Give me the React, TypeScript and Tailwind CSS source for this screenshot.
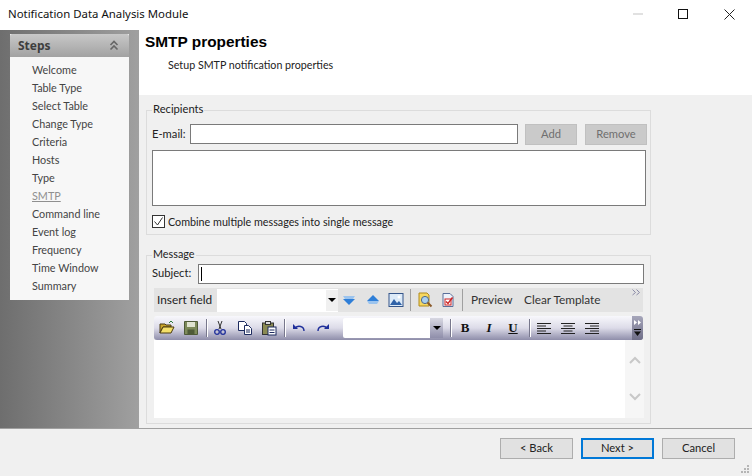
import { ReactNode } from "react";

const steps = ["Welcome", "Table Type", "Select Table", "Change Type", "Criteria", "Hosts", "Type", "SMTP", "Command line", "Event log", "Frequency", "Time Window", "Summary"];

const Ico = ({ children, className = "" }: { children: ReactNode; className?: string }) => (
	<svg width="16" height="16" viewBox="0 0 16 16" className={`shrink-0 ${className}`}>{children}</svg>
);

const Arrow = ({ up }: { up?: boolean }) => (
	<Ico>
		{up ? (
			<>
				<path d="M8 3l6 6H2z" fill="#2f7fd8" />
				<path d="M2 9h12l-2 3H4z" fill="#9cc4ee" />
			</>
		) : (
			<>
				<path d="M2 4h12l-2 3H4z" fill="#9cc4ee" />
				<path d="M2 7h12l-6 6z" fill="#2f7fd8" />
			</>
		)}
	</Ico>
);

const Caret = () => <span className="w-0 h-0 border-x-[4px] border-x-transparent border-t-[4px] border-t-black"></span>;

const Sep = ({ className = "" }: { className?: string }) => <span className={`w-[2px] h-[18px] shrink-0 bg-[#77778c] border-r border-white ${className}`}></span>;

const WinButton = ({ label, focused }: { label: string; focused?: boolean }) => (
	<button className={`w-[73px] h-[21px] text-[#222] flex items-center justify-center bg-[#e1e1e1] ${focused ? "border-2 border-[#0078d7]" : "border border-[#adadad]"}`}>{label}</button>
);

export default function App() {
	return (
		<div className="w-[752px] h-[476px] overflow-hidden flex flex-col bg-[#f0f0f0] text-[11.200px] text-[#222] font-['Lato','Liberation_Sans',sans-serif]">
			{/* title bar */}
			<div className="h-[30px] shrink-0 bg-white flex items-center pl-[8px] pr-[17px] pb-[2px]">
				<span className="text-[11.400px] text-[#111] flex-1 font-['Noto_Sans',sans-serif]">Notification Data Analysis Module</span>
				<svg width="10" height="2" className="mr-[35px]"><rect width="10" height="1" y="0.5" fill="#c4c4c4" /></svg>
				<svg width="10" height="10" className="mr-[36px]"><rect x="0.5" y="0.5" width="9" height="9" fill="none" stroke="#111" /></svg>
				<svg width="11" height="11"><path d="M.5.5l10 10M10.500.5l-10 10" stroke="#222" fill="none" /></svg>
			</div>

			<div className="flex-1 flex min-h-0">
				{/* steps side */}
				<div className="w-[139px] shrink-0 bg-gradient-to-r from-[#6e6e6e] to-[#a0a0a0] pt-[4px] pl-[10px]">
					<div className="w-[119px] h-[266px] bg-[#f7f7f7]">
						<div className="h-[23px] rounded-t-[2px] bg-gradient-to-b from-[#c8c8c8] to-[#a2a2a2] flex items-center justify-between pl-[8px] pr-[10px]">
							<span className="font-bold text-[#3e3e3e] text-[12px] font-['Noto_Sans',sans-serif]">Steps</span>
							<svg width="10" height="11" viewBox="0 0 10 11" fill="none" stroke="#666" strokeWidth="1.600"><path d="M1.500 5l3.500-3.500L8.500 5M1.500 9.500L5 6l3.500 3.500" /></svg>
						</div>
						<ul className="pt-[4px] pl-[22px] text-[10.800px]">
							{steps.map((s) => (
								<li key={s} className={`h-[18px] leading-[18px] ${s === "SMTP" ? "text-[#8f8f8f] underline" : "text-[#444]"}`}>{s}</li>
							))}
						</ul>
					</div>
				</div>

				{/* main */}
				<div className="flex-1 flex flex-col min-w-0">
					<div className="h-[65px] shrink-0 bg-white pl-[6px]">
						<h1 className="font-['Liberation_Sans',sans-serif] font-bold text-[15.400px] leading-[18px] pt-[3px] text-black">SMTP properties</h1>
						<p className="pl-[23px] pt-[5px] leading-[18px] text-[10.700px]">Setup SMTP notification properties</p>
					</div>

					<div className="flex-1 pl-[7px] pt-[8px]">
						<fieldset className="w-[505px] h-[132px] border border-[#dcdcdc] pl-[5px] pr-[3px]">
							<legend className="px-[1px] leading-[12px] pb-[2px]">Recipients</legend>
							<div className="flex items-center h-[21px] mt-[7px]">
								<span className="w-[38px] -mt-[1px]">E-mail:</span>
								<div className="w-[328px] h-[20px] bg-white border border-[#7a7a7a] self-start"></div>
								<button className="ml-[7px] w-[52px] h-[21px] bg-[#cacaca] border border-[#c0c0c0] text-[#6f6f6f]">Add</button>
								<button className="ml-[8px] w-[62px] h-[21px] bg-[#cacaca] border border-[#c0c0c0] text-[#6f6f6f]">Remove</button>
							</div>
							<div className="w-[494px] h-[56px] mt-[5px] bg-white border border-[#7a7a7a]"></div>
							<label className="flex items-center mt-[8px] h-[14px] text-[10.750px] leading-[16px]">
								<span className="w-[13px] h-[13px] border border-[#333] bg-white flex items-center justify-center mr-[3px]">
									<svg width="11" height="11" viewBox="0 0 11 11" fill="none" stroke="#333" strokeWidth="1"><path d="M1.500 5.500l3 3.500 5-7.500" /></svg>
								</span>
								<span className="pt-[1px]">Combine multiple messages into single message</span>
							</label>
						</fieldset>

						<fieldset className="w-[505px] h-[176px] mt-[13px] border border-[#dcdcdc] pl-[4px]">
							<legend className="ml-[1px] px-[1px] leading-[12px] pb-[2px] text-[10.800px]">Message</legend>
							<div className="flex items-center h-[20px] mt-[2px]">
								<span className="w-[47px] pl-[1px] -mt-[1px]">Subject:</span>
								<div className="w-[446px] h-[20px] bg-white border border-[#7a7a7a] flex items-center pl-[2px]">
									<span className="w-px h-[14px] bg-black"></span>
								</div>
							</div>

							{/* toolbar one */}
							<div className="w-[489px] ml-[3px] mt-[4px] h-[24px] bg-[#e3e3e3] flex items-center relative whitespace-nowrap text-[11.800px]">
								<span className="pl-[3px] w-[63px] shrink-0">Insert field</span>
								<div className="w-[121px] h-[23px] bg-white flex items-center justify-end">
									<span className="w-[12px] h-[21px] bg-[#f0f0f0] flex items-center justify-center"><Caret /></span>
								</div>
								<span className="ml-[3px]"><Arrow /></span>
								<span className="ml-[8px]"><Arrow up /></span>
								<Ico className="ml-[7px]">
									<rect x="1" y="1.500" width="14" height="13" fill="#dceaf8" stroke="#34558a" />
									<path d="M2 13l4-6 3 4 2-2 3 4z" fill="#2f62a8" />
									<circle cx="11" cy="5" r="1.500" fill="#fff" />
								</Ico>
								<span className="ml-[6px] w-px h-[22px] bg-[#a0a0a0]"></span>
								<Ico className="ml-[6px]">
									<path d="M2 1h8l2 2v11H2z" fill="#f6d860" stroke="#b08a1c" />
									<circle cx="8" cy="8" r="3.600" fill="#a9d0f0" stroke="#4f6a8a" />
									<path d="M10.500 10.500l4 4" stroke="#8a5a2a" strokeWidth="2" />
								</Ico>
								<Ico className="ml-[7px]">
									<path d="M3 1.500h7l3 3v10H3z" fill="#eef2fa" stroke="#5a6f9a" />
									<rect x="5" y="7" width="6" height="6" fill="#fff" stroke="#c22" />
									<path d="M6 9.500l2 2 4.500-6" fill="none" stroke="#c22" strokeWidth="1.400" />
								</Ico>
								<span className="ml-[6px] w-px h-[22px] bg-[#a0a0a0]"></span>
								<span className="ml-[8px] w-[53px] text-[#333]">Preview</span>
								<span className="text-[#333]">Clear Template</span>
								<svg width="9" height="7" viewBox="0 0 9 7" fill="none" stroke="#8b8ba8" className="absolute right-[2px] top-[1px]"><path d="M.5.500l3 3-3 2.500M4.500.500l3 3-3 2.500" /></svg>
							</div>

							{/* toolbar two */}
							<div className="w-[489px] ml-[3px] mt-[4px] h-[24px] rounded-[3px] bg-gradient-to-b from-[#f8f8fc] via-[#dcdbe8] to-[#8f8eaa] flex items-center pl-[5px] text-[#111]">
								<Ico>
									<path d="M1 4h5l1 1h5v2H4L1 13z" fill="#caa52a" stroke="#4a3a10" />
									<path d="M4 7h11l-3 6H1z" fill="#f4df6a" stroke="#4a3a10" />
									<path d="M10 3l2-2 2 2" fill="none" stroke="#2a7a3a" />
								</Ico>
								<Ico className="ml-[8px]">
									<path d="M1.500 1.500h13v13h-13z" fill="#7d8a5a" stroke="#4e5a38" />
									<rect x="4" y="2" width="8" height="5" fill="#dfe3d0" />
									<rect x="4.500" y="9.500" width="7" height="5" fill="#4e5a38" />
								</Ico>
								<Sep className="ml-[7px]" />
								<Ico className="ml-[4px]">
									<path d="M6 1l3 8M10 1L7 9" stroke="#333" fill="none" />
									<circle cx="5" cy="12" r="2.300" fill="none" stroke="#1f2f9a" strokeWidth="1.300" />
									<circle cx="11" cy="12" r="2.300" fill="none" stroke="#1f2f9a" strokeWidth="1.300" />
								</Ico>
								<Ico className="ml-[9px]">
									<path d="M1.500 1.500h6l2 2v7h-8z" fill="#fff" stroke="#1d2b5f" />
									<path d="M7.500 5.500h4l3 3v6h-7z" fill="#fff" stroke="#1d2b5f" />
									<path d="M9 10h4M9 12h4" stroke="#1d2b5f" />
								</Ico>
								<Ico className="ml-[8px]">
									<rect x="1.500" y="3" width="11" height="11.500" fill="#8a8a52" stroke="#333" />
									<rect x="4.500" y="1.500" width="5" height="3" fill="#ddd" stroke="#333" />
									<rect x="7" y="7" width="8" height="8" fill="#fff" stroke="#1d2b5f" />
									<path d="M8.500 10h5M8.500 12.500h5" stroke="#1d2b5f" />
								</Ico>
								<Sep className="ml-[7px]" />
								<Ico className="ml-[5px]">
									<path d="M2 4v5h5z" fill="#1f2f9a" />
									<path d="M4 8c3-3 9-2 9 3" fill="none" stroke="#1f2f9a" strokeWidth="1.400" />
								</Ico>
								<Ico className="ml-[8px]">
									<path d="M14 4v5H9z" fill="#1f2f9a" />
									<path d="M12 8c-3-3-9-2-9 3" fill="none" stroke="#1f2f9a" strokeWidth="1.400" />
								</Ico>
								<div className="ml-[12px] w-[100px] h-[20px] bg-white rounded-l-[2px] flex items-center justify-end shrink-0">
									<span className="w-[13px] h-[20px] bg-gradient-to-b from-[#d8d8e2] to-[#8f8eaa] flex items-center justify-center"><Caret /></span>
								</div>
								<Sep className="ml-[7px]" />
								<span className="ml-[5px] w-[16px] text-center font-['Liberation_Serif',serif] font-bold text-[13px]">B</span>
								<span className="ml-[8px] w-[16px] text-center font-['Liberation_Serif',serif] font-bold italic text-[13px]">I</span>
								<span className="ml-[8px] w-[16px] text-center font-['Liberation_Serif',serif] font-bold underline text-[13px]">U</span>
								<Sep className="ml-[8px]" />
								<Ico className="ml-[5px]"><path d="M1 3.500h14M1 6h9M1 8.500h14M1 11h9M1 13.500h14" stroke="#222" /></Ico>
								<Ico className="ml-[8px]"><path d="M1 3.500h14M3.500 6h9M1 8.500h14M3.500 11h9M1 13.500h14" stroke="#222" /></Ico>
								<Ico className="ml-[8px]"><path d="M1 3.500h14M6 6h9M1 8.500h14M6 11h9M1 13.500h14" stroke="#222" /></Ico>
								<div className="ml-auto w-[11px] h-full bg-gradient-to-b from-[#a6a6ba] to-[#6f6e88] rounded-r-[3px] flex flex-col items-center justify-between py-[4px]">
									<svg width="7" height="5"><path d="M0 0l3 2.500-3 2.500zM4 0l3 2.500-3 2.500z" fill="#fff" /></svg>
									<svg width="7" height="7"><path d="M0 0h7v1H0zM0 2.500h7L3.500 7z" fill="#111" /></svg>
								</div>
							</div>

							{/* editor */}
							<div className="w-[490px] ml-[3px] h-[78px] bg-white flex justify-end">
								<div className="w-[19px] h-full bg-[#f6f6f6] flex flex-col items-center pt-[14px] gap-[21px]">
									<svg width="12" height="14" viewBox="0 0 12 14" fill="none" stroke="#c8c8c8" strokeWidth="2"><path d="M1 9l5-5 5 5" /></svg>
									<svg width="12" height="14" viewBox="0 0 12 14" fill="none" stroke="#c8c8c8" strokeWidth="2"><path d="M1 5l5 5 5-5" /></svg>
								</div>
							</div>
						</fieldset>
					</div>
				</div>
			</div>

			{/* footer */}
			<div className="h-[48px] shrink-0 border-t border-[#a0a0a0] flex items-start justify-end pr-[17px] gap-[8px] pt-[9px] relative">
				<WinButton label="< Back" />
				<WinButton label="Next >" focused />
				<WinButton label="Cancel" />
				<svg width="9" height="9" className="absolute right-[2px] bottom-[2px]" fill="#b5b5b5"><rect x="6" y="0" width="2" height="2" /><rect x="3" y="3" width="2" height="2" /><rect x="6" y="3" width="2" height="2" /><rect x="0" y="6" width="2" height="2" /><rect x="3" y="6" width="2" height="2" /><rect x="6" y="6" width="2" height="2" /></svg>
			</div>
		</div>
	);
}
